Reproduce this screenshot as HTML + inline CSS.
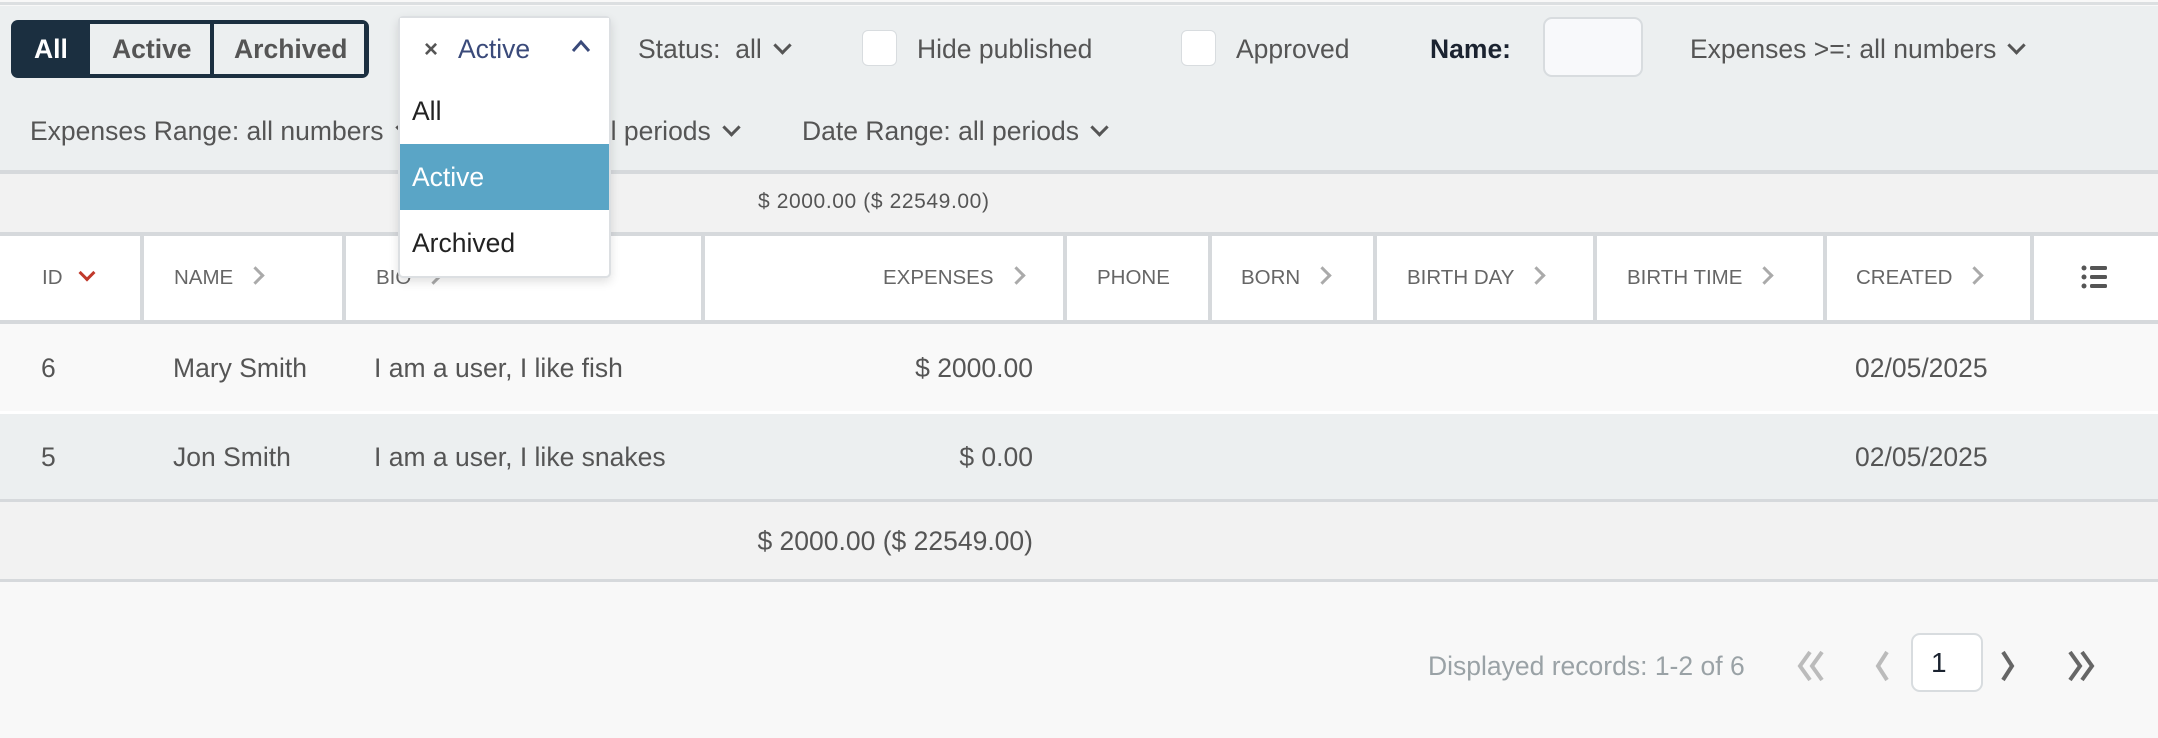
<!DOCTYPE html>
<html><head><meta charset="utf-8"><style>
*{box-sizing:border-box;margin:0;padding:0}
body{width:2158px;height:738px;background:#f8f8f8;font-family:"Liberation Sans",sans-serif;color:#555;position:relative;overflow:hidden}
.a{position:absolute;white-space:nowrap}
.t{font-size:26.5px;line-height:30px}
.h{font-size:20.5px;color:#666;line-height:24px}
.chev{display:inline-block;width:13px;height:13px;border-right:3px solid #555;border-bottom:3px solid #555;transform:rotate(45deg);margin-left:14px;vertical-align:6px}
.r{display:inline-block;width:13px;height:13px;border-right:3px solid #aaa;border-top:3px solid #aaa;transform:rotate(45deg);margin-left:16px;vertical-align:2px}
.vl{position:absolute;top:234px;height:88px;width:4px;background:#d6d9dc}
</style></head><body>
<div class="a" style="left:0;top:0;width:2158px;height:5px;background:#f8f8f8;border-bottom:3px solid #dcdfe1"></div>
<div class="a" style="left:0;top:6px;width:2158px;height:166px;background:#eceff0"></div>
<div class="a" style="left:0;top:170px;width:2158px;height:4px;background:#d6d9dc"></div>
<div class="a" style="left:0;top:174px;width:2158px;height:60px;background:#f2f2f2"></div>
<div class="a" style="left:0;top:232px;width:2158px;height:4px;background:#d6d9dc"></div>
<div class="a" style="left:0;top:236px;width:2158px;height:86px;background:#fff"></div>
<div class="a" style="left:0;top:320px;width:2158px;height:4px;background:#d6d9dc"></div>
<div class="a" style="left:0;top:324px;width:2158px;height:87px;background:#f9f9f9"></div>
<div class="a" style="left:0;top:411px;width:2158px;height:3px;background:#fff"></div>
<div class="a" style="left:0;top:414px;width:2158px;height:86px;background:#eceff0"></div>
<div class="a" style="left:0;top:499px;width:2158px;height:3px;background:#d6d9dc"></div>
<div class="a" style="left:0;top:502px;width:2158px;height:78px;background:#f2f2f2"></div>
<div class="a" style="left:0;top:579px;width:2158px;height:3px;background:#d6d9dc"></div>

<!-- segmented -->
<div class="a" style="left:11px;top:20px;width:358px;height:58px;background:#1b2f40;border-radius:7px"></div>
<div class="a" style="left:90px;top:24px;width:120px;height:50px;background:#eceff0"></div>
<div class="a" style="left:214px;top:24px;width:150px;height:50px;background:#eceff0"></div>
<div class="a t" style="left:34px;top:34px;color:#fff;font-weight:bold">All</div>
<div class="a t" style="left:112px;top:34px;color:#555;font-weight:bold">Active</div>
<div class="a t" style="left:234px;top:34px;color:#555;font-weight:bold">Archived</div>

<!-- filters row1 -->
<div class="a t" style="left:638px;top:34px">Status:&nbsp; all<span class="chev"></span></div>
<div class="a" style="left:862px;top:30px;width:35px;height:36px;background:#fff;border:1px solid #d8dcdf;border-radius:6px"></div>
<div class="a t" style="left:917px;top:34px">Hide published</div>
<div class="a" style="left:1181px;top:30px;width:35px;height:36px;background:#fff;border:1px solid #d8dcdf;border-radius:6px"></div>
<div class="a t" style="left:1236px;top:34px">Approved</div>
<div class="a t" style="left:1430px;top:34px;color:#1b2330;font-weight:bold">Name:</div>
<div class="a" style="left:1543px;top:17px;width:100px;height:60px;background:#f8f9fb;border:2px solid #d8dcdf;border-radius:9px"></div>
<div class="a t" style="left:1690px;top:34px">Expenses &gt;=: all numbers<span class="chev"></span></div>
<!-- row2 -->
<div class="a t" style="left:30px;top:116px">Expenses Range: all numbers<span class="chev"></span></div>
<div class="a t" style="left:590px;top:116px">all periods<span class="chev"></span></div>
<div class="a t" style="left:802px;top:116px">Date Range: all periods<span class="chev"></span></div>

<div class="a" style="left:758px;top:190px;font-size:21px;letter-spacing:0.6px;color:#555">$ 2000.00 ($ 22549.00)</div>

<!-- header -->
<div class="vl" style="left:140px"></div><div class="vl" style="left:342px"></div><div class="vl" style="left:701px"></div><div class="vl" style="left:1063px"></div><div class="vl" style="left:1208px"></div><div class="vl" style="left:1373px"></div><div class="vl" style="left:1593px"></div><div class="vl" style="left:1823px"></div><div class="vl" style="left:2030px"></div>
<div class="a h" style="left:42px;top:266px">ID<span style="display:inline-block;width:12px;height:12px;border-right:3px solid #c0392b;border-bottom:3px solid #c0392b;transform:rotate(45deg);margin-left:18px;vertical-align:5px"></span></div>
<div class="a h" style="left:174px;top:266px">NAME<span class="r"></span></div>
<div class="a h" style="left:376px;top:266px">BIO<span class="r"></span></div>
<div class="a h" style="left:883px;top:266px">EXPENSES<span class="r"></span></div>
<div class="a h" style="left:1097px;top:266px">PHONE</div>
<div class="a h" style="left:1241px;top:266px">BORN<span class="r"></span></div>
<div class="a h" style="left:1407px;top:266px">BIRTH DAY<span class="r"></span></div>
<div class="a h" style="left:1627px;top:266px">BIRTH TIME<span class="r"></span></div>
<div class="a h" style="left:1856px;top:266px">CREATED<span class="r"></span></div>
<svg class="a" style="left:2080px;top:264px" width="30" height="26" viewBox="0 0 30 26"><g fill="#555"><circle cx="4" cy="4" r="2.5"/><circle cx="4" cy="13" r="2.5"/><circle cx="4" cy="22" r="2.5"/><rect x="10" y="2" width="17" height="4" rx="1.5"/><rect x="10" y="11" width="17" height="4" rx="1.5"/><rect x="10" y="20" width="17" height="4" rx="1.5"/></g></svg>

<!-- rows -->
<div class="a t" style="left:41px;top:353px">6</div>
<div class="a t" style="left:173px;top:353px">Mary Smith</div>
<div class="a t" style="left:374px;top:353px">I am a user, I like fish</div>
<div class="a t" style="right:1125px;top:353px">$ 2000.00</div>
<div class="a t" style="left:1855px;top:353px">02/05/2025</div>
<div class="a t" style="left:41px;top:442px">5</div>
<div class="a t" style="left:173px;top:442px">Jon Smith</div>
<div class="a t" style="left:374px;top:442px">I am a user, I like snakes</div>
<div class="a t" style="right:1125px;top:442px">$ 0.00</div>
<div class="a t" style="left:1855px;top:442px">02/05/2025</div>
<div class="a t" style="right:1125px;top:526px">$ 2000.00 ($ 22549.00)</div>

<!-- pagination -->
<div class="a t" style="left:1428px;top:651px;color:#9aa2a6">Displayed records: 1-2 of 6</div>
<svg class="a" style="left:1792px;top:648px" width="40" height="36"><path d="M18 4 L8 18 L18 32 M30 4 L20 18 L30 32" stroke="#bbb" stroke-width="4" fill="none"/></svg>
<svg class="a" style="left:1872px;top:648px" width="20" height="36"><path d="M15 4 L6 18 L15 32" stroke="#bbb" stroke-width="4" fill="none"/></svg>
<div class="a" style="left:1911px;top:633px;width:72px;height:59px;background:#fff;border:2px solid #d8dcdf;border-radius:9px;font-size:28px;color:#1b2330;padding-left:18px;line-height:55px">1</div>
<svg class="a" style="left:1998px;top:648px" width="20" height="36"><path d="M5 4 L14 18 L5 32" stroke="#666" stroke-width="4" fill="none"/></svg>
<svg class="a" style="left:2064px;top:648px" width="40" height="36"><path d="M6 4 L16 18 L6 32 M18 4 L28 18 L18 32" stroke="#666" stroke-width="4" fill="none"/></svg>

<!-- dropdown -->
<div class="a" style="left:398px;top:16px;width:213px;height:262px;background:#fff;border:2px solid #dcdfe2;border-radius:5px;box-shadow:0 4px 10px rgba(0,0,0,.12)"></div>
<div class="a" style="left:400px;top:18px;width:209px;height:146px;background:#fff"></div>
<div class="a" style="left:424px;top:36px;font-size:24px;color:#555;font-weight:bold">×</div>
<div class="a t" style="left:458px;top:34px;color:#3a4a7a">Active</div>
<svg class="a" style="left:570px;top:38px" width="22" height="16"><path d="M3 13 L11 4 L19 13" stroke="#3a4a7a" stroke-width="3" fill="none"/></svg>
<div class="a t" style="left:412px;top:96px;color:#222">All</div>
<div class="a" style="left:400px;top:144px;width:209px;height:66px;background:#5aa5c6"></div>
<div class="a t" style="left:412px;top:162px;color:#fff">Active</div>
<div class="a t" style="left:412px;top:228px;color:#222">Archived</div>
</body></html>
